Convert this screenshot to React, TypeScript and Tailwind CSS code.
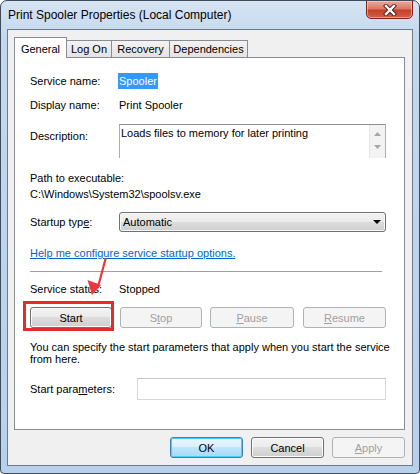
import React from "react";

const U = ({ children }: { children: React.ReactNode }) => <span className="underline">{children}</span>;

function SvcButton({ children, disabled, w, ml }: { children: React.ReactNode; disabled?: boolean; w: string; ml?: string }) {
  return (
    <div
      className={
        "h-[21px] flex items-center justify-center rounded-[3px] border " +
        w +
        " " +
        (ml ?? "") +
        " " +
        (disabled
          ? "border-[#adb2b5] bg-[#f4f4f4] text-[#a0a0a0]"
          : "border-[#707070] bg-[linear-gradient(#f2f2f2_0%,#ebebeb_50%,#dddddd_50%,#cfcfcf_100%)] text-black shadow-[inset_0_0_0_1px_#fcfcfc]")
      }
    >
      {children}
    </div>
  );
}

export default function App() {
  return (
    <div className="relative w-[420px] h-[474px] flex flex-col font-['Liberation_Sans',Arial,sans-serif] text-[11px] leading-[16px] text-black rounded-t-[7px] rounded-b-[4px] border border-[#3d4b5c] bg-[linear-gradient(180deg,#d6e4f3_0%,#c3d8ee_8%,#b7d0ec_100%)] overflow-hidden">
      {/* Title bar */}
      <div className="h-[28px] flex items-start justify-between pl-[7px] pr-[6px]">
        <div className="mt-[7px] text-[12px] leading-[14px] text-black">Print Spooler Properties (Local Computer)</div>
        <div className="w-[47px] h-[19px] -mt-px rounded-b-[5px] border border-[#7a2418] bg-[linear-gradient(180deg,#eaa99d_0%,#d87a68_45%,#c53f2a_55%,#d2604c_100%)] flex items-center justify-center shadow-[inset_0_0_0_1px_rgba(255,220,210,0.5)]">
          <svg width="14" height="12" viewBox="0 0 14 12">
            <path d="M3 2 L11 10 M11 2 L3 10" stroke="#4a1a14" strokeWidth="4.2" strokeLinecap="square" />
            <path d="M3 2 L11 10 M11 2 L3 10" stroke="#ffffff" strokeWidth="2.4" strokeLinecap="square" />
          </svg>
        </div>
      </div>

      {/* Client area */}
      <div className="mx-[6px] mb-[7px] flex-1 flex flex-col border border-[#6d7a8a] bg-[#f0f0f0]">
        {/* Tabs */}
        <div className="flex items-end mt-[7px] ml-[6px] h-[20px]">
          <div className="relative z-10 w-[53px] h-[21px] -mb-px border border-b-0 border-[#898c95] bg-white flex items-start justify-center pt-[3px]">
            General
          </div>
          <div className="w-[46px] -ml-px h-[17px] border border-b-0 border-[#898c95] bg-[linear-gradient(#f3f3f3,#e3e3e3)] flex items-center justify-center">
            Log On
          </div>
          <div className="w-[59px] -ml-px h-[17px] border border-b-0 border-[#898c95] bg-[linear-gradient(#f3f3f3,#e3e3e3)] flex items-center justify-center">
            Recovery
          </div>
          <div className="w-[79px] -ml-px h-[17px] border border-b-0 border-[#898c95] bg-[linear-gradient(#f3f3f3,#e3e3e3)] flex items-center justify-center">
            Dependencies
          </div>
        </div>

        {/* Panel */}
        <div className="ml-[6px] w-[391px] border border-[#898c95] bg-white flex flex-col pl-[15px] pb-[29px]">
          <div className="mt-[15px] h-[16px] flex">
            <div className="w-[89px]">Service name:</div>
            <div className="bg-[#3399ff] text-white px-[1px] -ml-px">Spooler</div>
          </div>
          <div className="mt-[8px] h-[16px] flex">
            <div className="w-[89px]">Display name:</div>
            <div>Print Spooler</div>
          </div>
          <div className="mt-[11px] h-[34px] flex">
            <div className="w-[89px] pt-[4px]">Description:</div>
            <div className="w-[267px] h-[34px] border border-b-0 border-[#abadb3] border-t-[#8e8f8f] flex">
              <div className="flex-1 pl-[1px] pt-[1px] leading-[14px]">Loads files to memory for later printing</div>
              <div className="w-[16px] bg-[#f3f3f3] border-l border-[#e6e6e6] flex flex-col items-center pt-[7px] gap-[9px]">
                <svg width="7" height="4" viewBox="0 0 7 4"><path d="M0 4 L3.5 0 L7 4 Z" fill="#a6a6a6" /></svg>
                <svg width="7" height="4" viewBox="0 0 7 4"><path d="M0 0 L3.5 4 L7 0 Z" fill="#a6a6a6" /></svg>
              </div>
            </div>
          </div>
          <div className="mt-[12px]">Path to executable:</div>
          <div>C:\Windows\System32\spoolsv.exe</div>
          <div className="mt-[10px] h-[20px] flex items-center">
            <div className="w-[89px]">
              Startup typ<U>e</U>:
            </div>
            <div className="w-[267px] h-[20px] rounded-[3px] border border-[#707070] bg-[linear-gradient(#f2f2f2_0%,#ebebeb_50%,#dddddd_50%,#cfcfcf_100%)] shadow-[inset_0_0_0_1px_#fafafa] flex items-center justify-between pl-[3px] pr-[4px]">
              <span>Automatic</span>
              <svg width="8" height="4" viewBox="0 0 8 4"><path d="M0 0 L8 0 L4 4 Z" fill="#000" /></svg>
            </div>
          </div>
          <div className="mt-[13px] h-[16px]">
            <span className="text-[#0066cc] underline">Help me configure service startup options.</span>
          </div>
          <div className="mt-[10px] w-[352px] h-px bg-[#a0a0a0]" />
          <div className="mt-[9px] h-[16px] flex">
            <div className="w-[89px]">Service status:</div>
            <div>Stopped</div>
          </div>
          <div className="mt-[10px] flex">
            <div className="relative">
              <SvcButton w="w-[82px]">Start</SvcButton>
              <div className="absolute -left-[7px] -top-[6px] w-[91px] h-[30px] border-[3px] border-[#e52b2b]" />
            </div>
            <SvcButton disabled w="w-[82px]" ml="ml-[8px]">
              S<U>t</U>op
            </SvcButton>
            <SvcButton disabled w="w-[84px]" ml="ml-[8px]">
              <U>P</U>ause
            </SvcButton>
            <SvcButton disabled w="w-[83px]" ml="ml-[9px]">
              <U>R</U>esume
            </SvcButton>
          </div>
          <div className="mt-[13px] leading-[12px] whitespace-nowrap">
            You can specify the start parameters that apply when you start the service
            <br />
            from here.
          </div>
          <div className="mt-[13px] h-[22px] flex items-center">
            <div className="w-[107px]">
              Start para<U>m</U>eters:
            </div>
            <div className="w-[249px] h-[22px] border border-[#d6d8dc] border-t-[#c3c5c9] bg-white" />
          </div>
        </div>

        {/* Bottom buttons */}
        <div className="mt-[7px] flex justify-end gap-[8px] pr-[7px]">
          <div className="w-[73px] h-[21px] rounded-[3px] border border-[#3c7fb1] bg-[linear-gradient(#eaf6fd_0%,#d9f0fc_50%,#bee6fd_50%,#a7d9f5_100%)] shadow-[inset_0_0_0_1px_#48d0f7] flex items-center justify-center">
            OK
          </div>
          <div className="w-[73px] h-[21px] rounded-[3px] border border-[#707070] bg-[linear-gradient(#f2f2f2_0%,#ebebeb_50%,#dddddd_50%,#cfcfcf_100%)] shadow-[inset_0_0_0_1px_#fcfcfc] flex items-center justify-center">
            Cancel
          </div>
          <div className="w-[73px] h-[21px] rounded-[3px] border border-[#adb2b5] bg-[#f4f4f4] text-[#a0a0a0] flex items-center justify-center">
            <U>A</U>pply
          </div>
        </div>
      </div>

      {/* Red arrow annotation */}
      <svg className="absolute left-[80px] top-[250px]" width="40" height="50" viewBox="0 0 40 50">
        <path d="M24.5 8 L17 36" stroke="#e8383d" strokeWidth="2.2" strokeLinecap="round" />
        <path d="M11 44 L6.5 29 L20 34 Z" fill="#e8383d" />
      </svg>
    </div>
  );
}
